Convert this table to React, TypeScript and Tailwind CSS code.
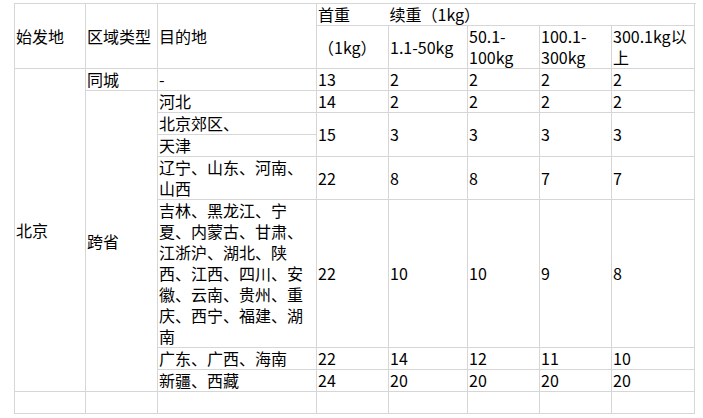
import React from "react";

const b = "border border-[#d6d6d6]";
const td = `${b} align-middle text-left p-0 pl-[1px] whitespace-nowrap`;

export default function App() {
  const widths = [71, 72, 159, 72, 79, 72, 72, 83];
  return (
    <div
      className="w-[703px] h-[418px] bg-white text-black pl-[14px] pt-[3px]"
      style={{ fontFamily: '"Noto Sans CJK SC", "Noto Sans", sans-serif' }}
    >
      <table className="border-collapse table-fixed w-[680px] text-[16px] leading-[21px]">
        <colgroup>
          {widths.map((w, i) => (
            <col key={i} style={{ width: w }} />
          ))}
        </colgroup>
        <tbody>
          <tr className="h-[21px]">
            <td className={td} rowSpan={2}>始发地</td>
            <td className={td} rowSpan={2}>区域类型</td>
            <td className={td} rowSpan={2}>目的地</td>
            <td className={`${td} border-r-0`}>首重</td>
            <td className={`${td} border-l-0`} colSpan={5}>续重（1kg）</td>
          </tr>
          <tr className="h-[43px]">
            <td className={td}>（1kg）</td>
            <td className={td}>1.1-50kg</td>
            <td className={td}>50.1-<br />100kg</td>
            <td className={td}>100.1-<br />300kg</td>
            <td className={td}>300.1kg以<br />上</td>
          </tr>
          <tr className="h-[22px]">
            <td className={td} rowSpan={8}>北京</td>
            <td className={td}>同城</td>
            <td className={td}>-</td>
            <td className={td}>13</td>
            <td className={td}>2</td>
            <td className={td}>2</td>
            <td className={td}>2</td>
            <td className={td}>2</td>
          </tr>
          <tr className="h-[22px]">
            <td className={td} rowSpan={7}>跨省</td>
            <td className={td}>河北</td>
            <td className={td}>14</td>
            <td className={td}>2</td>
            <td className={td}>2</td>
            <td className={td}>2</td>
            <td className={td}>2</td>
          </tr>
          <tr className="h-[22px]">
            <td className={td}>北京郊区、</td>
            <td className={td} rowSpan={2}>15</td>
            <td className={td} rowSpan={2}>3</td>
            <td className={td} rowSpan={2}>3</td>
            <td className={td} rowSpan={2}>3</td>
            <td className={td} rowSpan={2}>3</td>
          </tr>
          <tr className="h-[22px]">
            <td className={td}>天津</td>
          </tr>
          <tr className="h-[43px]">
            <td className={td}>辽宁、山东、河南、<br />山西</td>
            <td className={td}>22</td>
            <td className={td}>8</td>
            <td className={td}>8</td>
            <td className={td}>7</td>
            <td className={td}>7</td>
          </tr>
          <tr className="h-[148px]">
            <td className={td}>
              吉林、黑龙江、宁<br />
              夏、内蒙古、甘肃、<br />
              江浙沪、湖北、陕<br />
              西、江西、四川、安<br />
              徽、云南、贵州、重<br />
              庆、西宁、福建、湖<br />
              南
            </td>
            <td className={td}>22</td>
            <td className={td}>10</td>
            <td className={td}>10</td>
            <td className={td}>9</td>
            <td className={td}>8</td>
          </tr>
          <tr className="h-[22px]">
            <td className={td}>广东、广西、海南</td>
            <td className={td}>22</td>
            <td className={td}>14</td>
            <td className={td}>12</td>
            <td className={td}>11</td>
            <td className={td}>10</td>
          </tr>
          <tr className="h-[22px]">
            <td className={td}>新疆、西藏</td>
            <td className={td}>24</td>
            <td className={td}>20</td>
            <td className={td}>20</td>
            <td className={td}>20</td>
            <td className={td}>20</td>
          </tr>
          <tr className="h-[22px]">
            <td className={td}></td>
            <td className={td}></td>
            <td className={td}></td>
            <td className={td}></td>
            <td className={td}></td>
            <td className={td}></td>
            <td className={td}></td>
            <td className={td}></td>
          </tr>
        </tbody>
      </table>
    </div>
  );
}
